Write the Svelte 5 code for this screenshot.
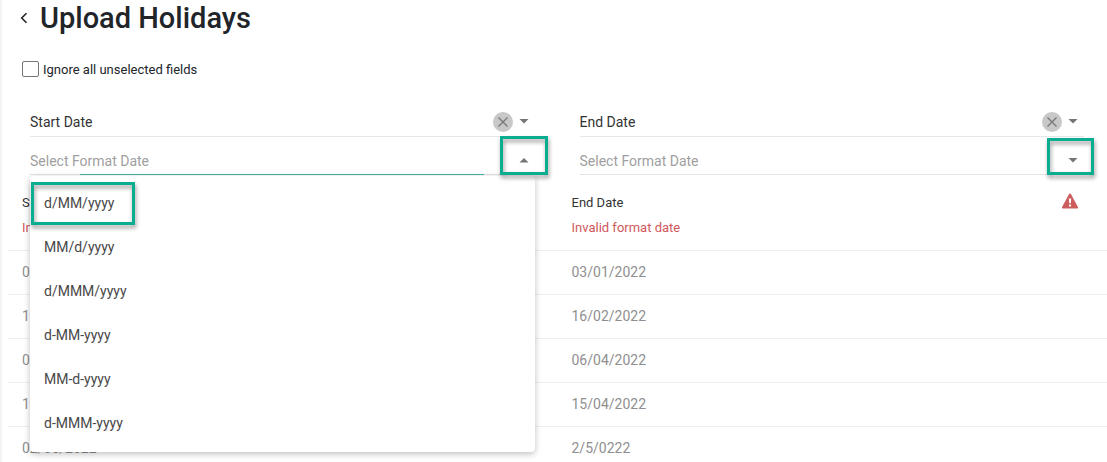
<script>
  const formats = ['d/MM/yyyy', 'MM/d/yyyy', 'd/MMM/yyyy', 'd-MM-yyyy', 'MM-d-yyyy', 'd-MMM-yyyy'];
  const rows = [
    ['03/01/2022', '03/01/2022'],
    ['16/02/2022', '16/02/2022'],
    ['06/04/2022', '06/04/2022'],
    ['13/04/2022', '15/04/2022'],
    ['02/05/2022', '2/5/0222']
  ];
  let columns = $state([
    { id: 'start', field: 'Start Date', format: '', open: true },
    { id: 'end', field: 'End Date', format: '', open: false }
  ]);
  let ignore = $state(false);

  function choose(column, format) {
    column.format = format;
    column.open = false;
  }
</script>

{#snippet arrow(up)}
  <svg width="10" height="5" viewBox="0 0 10 5" aria-hidden="true">
    <path d={up ? 'M5 0 9.500 4.600H.5z' : 'M.5 0h9L5 4.600z'} fill="#757575" />
  </svg>
{/snippet}

<main>
  <header>
    <button class="back" aria-label="Back">
      <svg width="8" height="12" viewBox="0 0 8 12" aria-hidden="true">
        <path d="M6.5 1.2 1.7 6l4.8 4.8" fill="none" stroke="#212529" stroke-width="1.6" />
      </svg>
    </button>
    <h1>Upload Holidays</h1>
  </header>

  <label class="ignore">
    <input type="checkbox" bind:checked={ignore} />
    Ignore all unselected fields
  </label>

  <section class="mapping">
    {#each columns as column (column.id)}
      <div class="column">
        <div class="field">
          <input aria-label="{column.id} field" bind:value={column.field} />
          <button class="clear" aria-label="Clear" onclick={() => (column.field = '')}>
            <svg width="10" height="10" viewBox="0 0 10 10" aria-hidden="true">
              <path d="M.5.5l9 9M9.5.5l-9 9" fill="none" stroke="#777" stroke-width="1.3" />
            </svg>
          </button>
          <button class="toggle" aria-label="Show fields">{@render arrow(false)}</button>
        </div>
        <div class="field format" class:open={column.open}>
          <input
            role="combobox"
            aria-label="{column.id} format"
            aria-expanded={column.open}
            aria-controls="{column.id}-formats"
            placeholder="Select Format Date"
            bind:value={column.format}
          />
          <button class="toggle" aria-label="Show formats" onclick={() => (column.open = !column.open)}>
            {@render arrow(column.open)}
            <span class="mark around"></span>
          </button>
          {#if column.open}
            <div class="menu" role="listbox" id="{column.id}-formats">
              {#each formats as format, i}
                <button role="option" aria-selected="false" onclick={() => choose(column, format)}>
                  {format}
                  {#if i === 0}<span class="mark first"></span>{/if}
                </button>
              {/each}
            </div>
          {/if}
        </div>
      </div>
    {/each}
  </section>

  <table>
    <thead>
      <tr>
        <th scope="col">Start Date<small>Invalid format date</small></th>
        <th scope="col">
          <svg class="warning" width="18" height="16" viewBox="0 0 18 16" role="img" aria-label="Invalid">
            <path
              d="M9 .5c.4 0 .7.2.9.5l7 13c.4.8 0 1.5-.9 1.5H2c-.9 0-1.3-.7-.9-1.5l7-13c.2-.3.5-.5.9-.5z"
              fill="#cd5c5c"
            />
            <path d="M7.8 5.500h2.400l-.4 4.700H8.200zM8 11.400h2v2H8z" fill="#fff" />
          </svg>
          End Date<small>Invalid format date</small>
        </th>
      </tr>
    </thead>
    <tbody>
      {#each rows as row}
        <tr>
          {#each row as cell}<td>{cell}</td>{/each}
        </tr>
      {/each}
    </tbody>
  </table>
</main>

<style>
  :global(body) {
    background: #fff;
    overflow: hidden;
  }
  main {
    font-family: Roboto, sans-serif;
    color: #212529;
    padding-left: 8px;
    box-shadow: inset 3px 0 3px -2px #e8e8e8;
  }
  button,
  input {
    font: inherit;
    color: inherit;
    border: 0;
    padding: 0;
    margin: 0;
    background: none;
  }
  header {
    display: flex;
    align-items: center;
    gap: 12px;
    height: 36px;
    padding-left: 12px;
  }
  .back {
    display: flex;
  }
  h1 {
    margin: 0;
    font-size: 29px;
    font-weight: 500;
    line-height: 36px;
  }
  .ignore {
    display: flex;
    align-items: center;
    gap: 4px;
    width: max-content;
    height: 18px;
    margin: 24px 0 0 14px;
    font-size: 13px;
  }
  .ignore input {
    appearance: none;
    box-sizing: border-box;
    width: 17px;
    height: 16px;
    border: 1px solid #767676;
    border-radius: 2px;
  }
  .ignore input:checked {
    background: #0aad8f;
  }
  .mapping {
    display: grid;
    grid-template-columns: 1fr 1fr;
    margin-top: 29px;
  }
  .column {
    padding: 0 23px 0 22px;
  }
  .field {
    position: relative;
    display: flex;
    align-items: center;
    box-sizing: border-box;
    height: 30px;
    border-bottom: 1px solid #e4e7ec;
    color: #333;
    font-size: 14px;
  }
  .field input {
    flex: 1;
    min-width: 0;
    outline: 0;
  }
  .format {
    height: 38px;
    padding-top: 10px;
    border-bottom-color: #e4e4e4;
  }
  .format input::placeholder {
    color: #a0a0a0;
    opacity: 1;
  }
  .open::after {
    content: '';
    position: absolute;
    left: 10%;
    right: 10%;
    bottom: -1px;
    height: 1px;
    background: #45b3a3;
  }
  .clear {
    display: flex;
    align-items: center;
    justify-content: center;
    width: 20px;
    height: 20px;
    border-radius: 50%;
    background: #c8c8c8;
  }
  .toggle {
    position: relative;
    display: flex;
    align-items: center;
    justify-content: center;
    width: 22px;
    height: 20px;
  }
  .mark {
    position: absolute;
    box-sizing: border-box;
    border: 3px solid #0aad8f;
    filter: drop-shadow(1px 3px 2px rgba(0, 0, 0, 0.4));
    pointer-events: none;
    z-index: 3;
  }
  .around {
    inset: -13px -10px -4px -15px;
  }
  .open .around {
    inset: -15px -13px -4px;
  }
  .first {
    inset: 1px auto 0 1px;
    width: 104px;
  }
  .menu {
    position: absolute;
    z-index: 2;
    top: 39px;
    left: 0;
    right: 0;
    padding: 5px 0 7px;
    background: #fff;
    border-radius: 4px;
    box-shadow: 0 2px 6px rgba(0, 0, 0, 0.25);
  }
  .menu button {
    position: relative;
    display: block;
    width: 100%;
    height: 44px;
    padding-left: 14px;
    text-align: left;
    color: #484848;
  }
  table {
    width: 100%;
    table-layout: fixed;
    border-collapse: collapse;
    text-align: left;
  }
  th {
    height: 75px;
    box-sizing: border-box;
    padding: 15px 14px 0;
    vertical-align: top;
    color: #333;
    font-size: 13px;
    font-weight: 400;
    line-height: 25px;
  }
  small {
    display: block;
    color: #d0585c;
    font-size: 13px;
  }
  .warning {
    float: right;
    margin: 3px 14px 0 0;
  }
  td {
    box-sizing: border-box;
    height: 44px;
    padding: 0 14px;
    border-top: 1px solid #eee;
    color: #8f8f8f;
    font-size: 14px;
  }
</style>
